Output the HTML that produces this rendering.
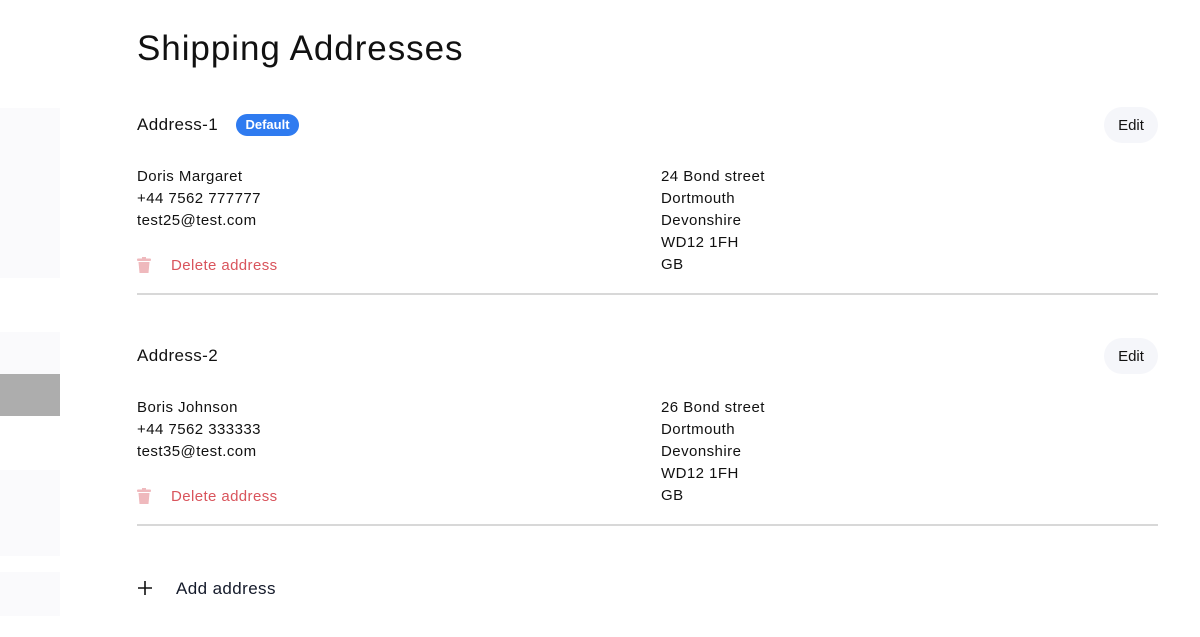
<!DOCTYPE html>
<html><head><style>
body{margin:0;width:1200px;height:637px;background:#fff;font-family:"Liberation Sans",sans-serif;color:#111;position:relative;overflow:hidden}
.p{position:absolute;left:0;width:60px}
.a{position:absolute;font-size:15px;line-height:22px;letter-spacing:0.45px}
h1{position:absolute;left:137px;top:29px;margin:0;font-size:35px;font-weight:400;letter-spacing:0.95px}
.t{position:absolute;left:137px;font-size:17px;letter-spacing:0.4px}
.edit{position:absolute;left:1104px;width:54px;height:36px;border-radius:18px;background:#f5f6fa;font-size:15px;text-align:center;line-height:37px}
.del{position:absolute;left:171px;font-size:15px;color:#d9545c;letter-spacing:0.4px}
.hr{position:absolute;left:137px;width:1021px;height:2px;background:#d8d8d8}
.badge{position:absolute;left:236px;top:114px;width:63px;height:22px;border-radius:11px;background:#2f7bf0;color:#fff;font-weight:700;font-size:13px;text-align:center;line-height:22px}
</style></head><body>
<div class="p" style="top:108px;height:170px;background:#fafafc"></div>
<div class="p" style="top:332px;height:42px;background:#fafafc"></div>
<div class="p" style="top:374px;height:42px;background:#adadad"></div>
<div class="p" style="top:470px;height:86px;background:#fafafc"></div>
<div class="p" style="top:572px;height:44px;background:#fafafc"></div>
<h1>Shipping Addresses</h1>

<div class="t" style="top:115px">Address-1</div>
<div class="badge">Default</div>
<div class="edit" style="top:107px">Edit</div>
<div class="a" style="left:137px;top:166px">Doris Margaret<br>+44 7562 777777<br>test25@test.com</div>
<div class="a" style="left:661px;top:166px">24 Bond street<br>Dortmouth<br>Devonshire<br>WD12 1FH<br>GB</div>
<svg style="position:absolute;left:137px;top:257px" width="14" height="16" viewBox="0 0 14 16"><rect x="0" y="1.5" width="14" height="2.5" rx="1" fill="#efb9bd"/><rect x="5" y="0" width="4" height="2" fill="#efb9bd"/><path d="M1.5 5h11l-1 11h-9z" fill="#efb9bd"/></svg>
<div class="del" style="top:257px">Delete address</div>
<div class="hr" style="top:293px"></div>

<div class="t" style="top:346px">Address-2</div>
<div class="edit" style="top:338px">Edit</div>
<div class="a" style="left:137px;top:397px">Boris Johnson<br>+44 7562 333333<br>test35@test.com</div>
<div class="a" style="left:661px;top:397px">26 Bond street<br>Dortmouth<br>Devonshire<br>WD12 1FH<br>GB</div>
<svg style="position:absolute;left:137px;top:488px" width="14" height="16" viewBox="0 0 14 16"><rect x="0" y="1.5" width="14" height="2.5" rx="1" fill="#efb9bd"/><rect x="5" y="0" width="4" height="2" fill="#efb9bd"/><path d="M1.5 5h11l-1 11h-9z" fill="#efb9bd"/></svg>
<div class="del" style="top:488px">Delete address</div>
<div class="hr" style="top:524px"></div>

<svg style="position:absolute;left:137px;top:580px" width="16" height="16" viewBox="0 0 16 16"><path d="M8 1v14M1 8h14" stroke="#111" stroke-width="1.6"/></svg>
<div style="position:absolute;left:176px;top:579px;font-size:17px;color:#141a2a;letter-spacing:0.4px">Add address</div>
</body></html>
